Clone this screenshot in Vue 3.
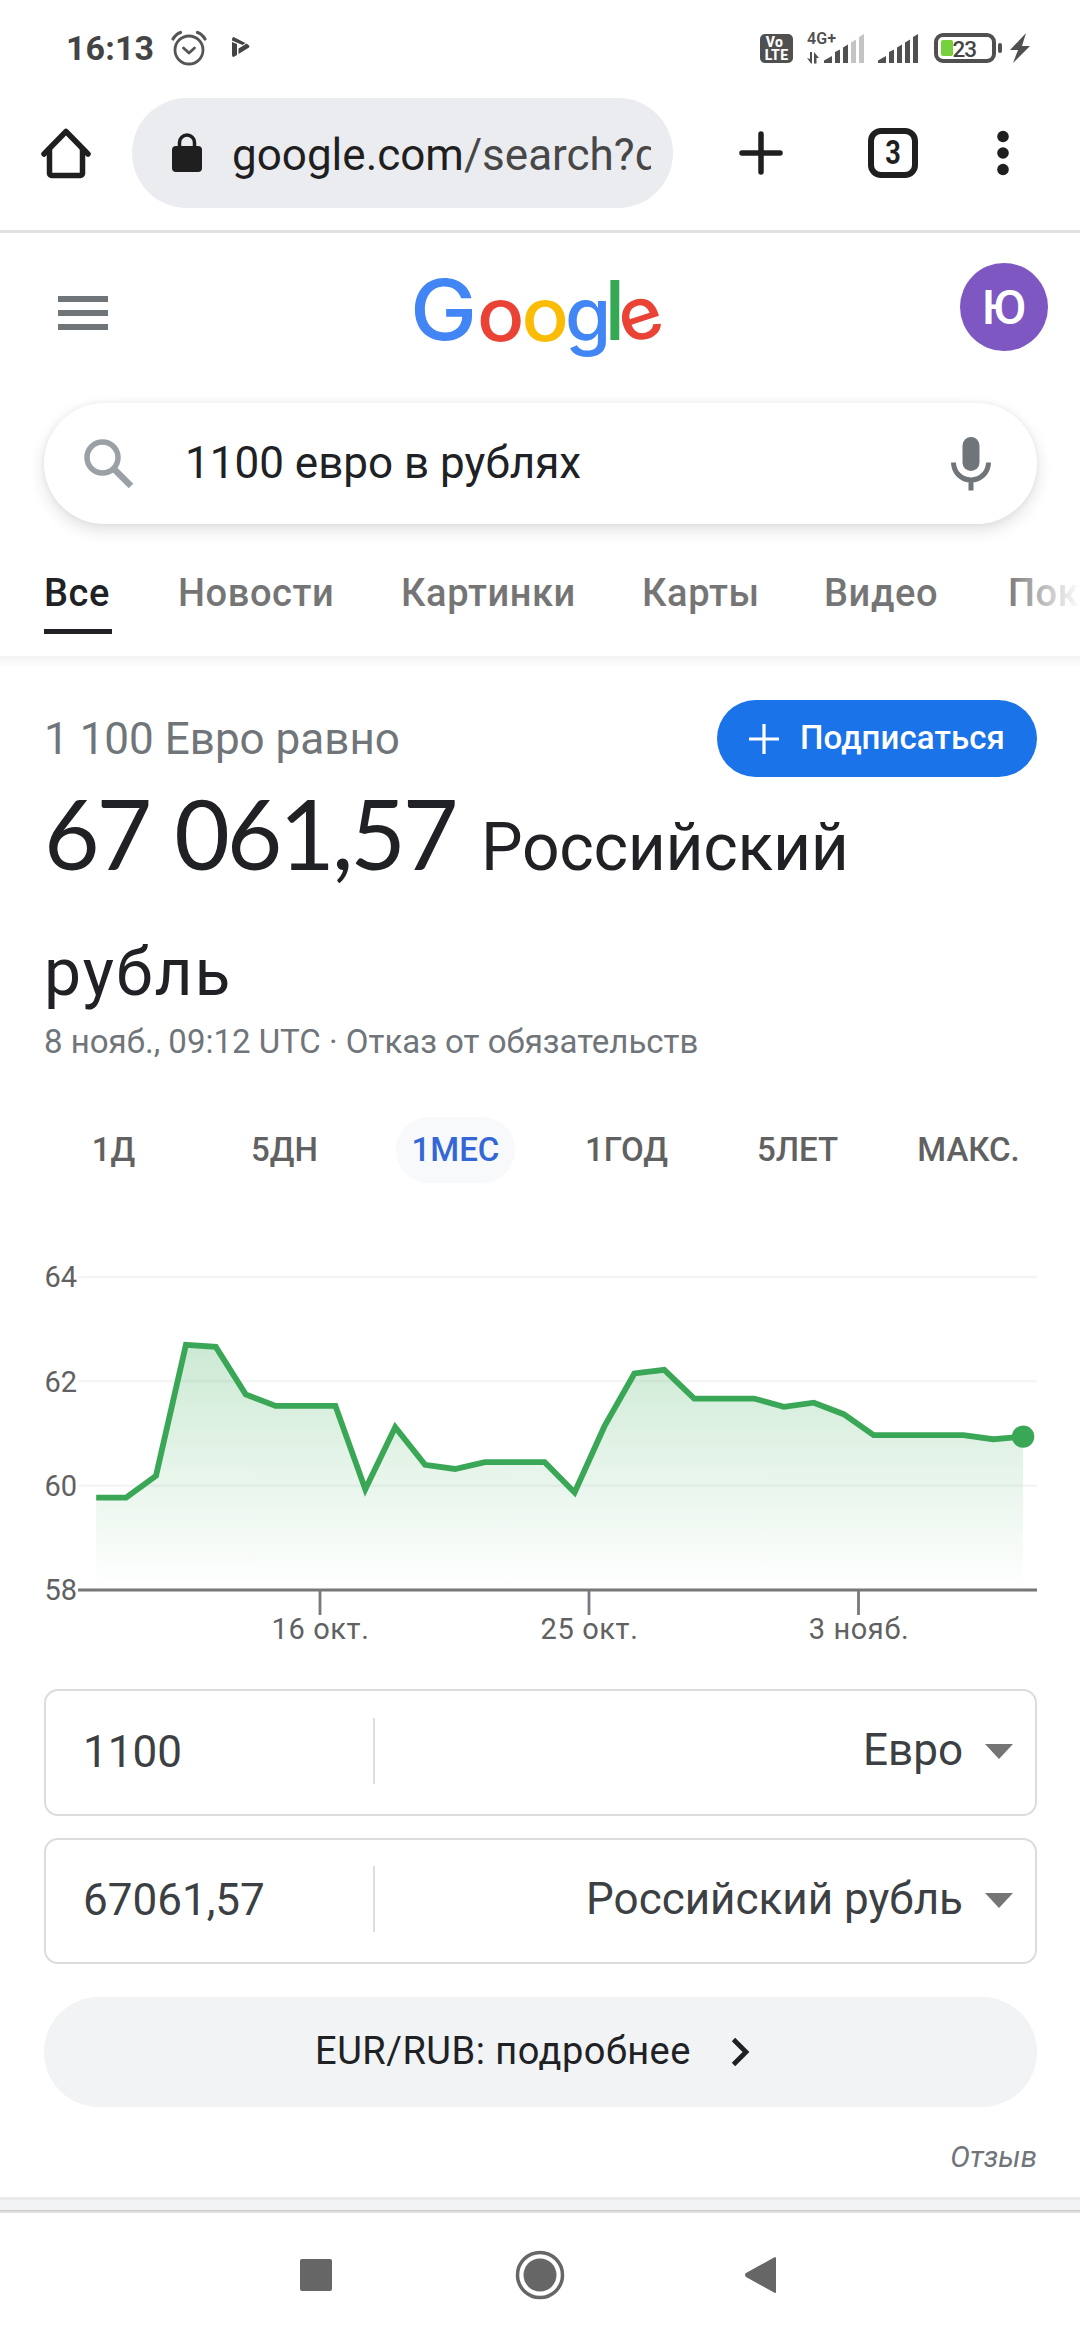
<template>
  <div class="screen">
    <!-- status bar -->
    <header class="status">
      <span class="clock">16:13</span>
      <svg class="alarm" width="36" height="36" viewBox="0 0 36 36" fill="none" stroke="#555" stroke-linecap="round">
        <circle cx="18" cy="20" r="14" stroke-width="2.8" />
        <path d="M12.5 18l5.5 5 5.5-5" stroke-width="2.8" stroke-linejoin="round" />
        <path d="M2 9q3-5 7.500-6.500M34 9q-3-5-7.500-6.500" stroke-width="3.200" />
      </svg>
      <svg class="play" width="18" height="20" viewBox="0 0 18 20" fill="#444">
        <path d="M1.500 0L13.500 6 10.500 8 0 3.500Q0 0 1.500 0z" />
        <path d="M0 5l5 2v11L1.500 20Q0 20 0 18z" />
        <path d="M14.500 6.500L17 8.500q1 1 0 2L6.500 17V11.500l5-3z" />
      </svg>
      <div class="status-right">
        <div class="volte"><span>Vo</span><span>LTE</span></div>
        <svg class="signal1" width="58" height="32" viewBox="0 0 58 32" fill="#505050">
          <text x="0" y="12" font-size="16" font-weight="600" textLength="29">4G+</text>
          <path d="M0 26l4 5.500h1V20H3v7zM7 20l5 6h-2.500v5.500H7z" />
          <path d="M17 31v-2.500l8-4.500v7zM28 31V20l5-2.500V31zM36 31V15.500l5-3V31z" />
          <path d="M44 31V10.500l5-3V31zM52 31V5l5-3v29z" fill="#c4c4c4" />
        </svg>
        <svg class="signal2" width="41" height="32" viewBox="0 0 41 32" fill="#505050">
          <path d="M0 31v-2.500l8-4.500v7zM11 31V20l5-2.500V31zM19 31V15.500l5-3V31zM27 31V10.500l5-3V31zM35 31V5l5-3v29z" />
        </svg>
        <svg class="battery" width="97" height="32" viewBox="0 0 97 32">
          <rect x="2" y="3" width="58" height="26" rx="7" fill="none" stroke="#505050" stroke-width="4" />
          <rect x="7" y="8" width="12" height="16" rx="2" fill="#76d13c" />
          <text x="18.500" y="25" font-size="22.500" font-weight="500" fill="#444" textLength="24.500">23</text>
          <rect x="64" y="11" width="4" height="10" rx="2" fill="#505050" />
          <path d="M92 1L76 18h8l-5 13 17-17h-8z" fill="#505050" />
        </svg>
      </div>
    </header>

    <!-- browser toolbar -->
    <div class="toolbar">
      <svg class="home" width="50" height="52" viewBox="0 0 50 52" fill="none" stroke="#1f1f1f" stroke-width="5.500">
        <path d="M3 27L25 4.500 47 27" stroke-linecap="round" stroke-linejoin="round" />
        <path d="M8.500 21.500v25a2 2 0 0 0 2 2h29a2 2 0 0 0 2-2v-25" />
      </svg>
      <div class="omnibox">
        <svg class="lock" width="30" height="40" viewBox="0 0 30 40">
          <rect y="13" width="30" height="26" rx="4" fill="#1f1f1f" />
          <path d="M7.500 15V9.500a7.500 7.500 0 0 1 15 0V15" fill="none" stroke="#1f1f1f" stroke-width="3.500" />
        </svg>
        <span class="url">google.com<em>/search?q</em></span>
      </div>
      <svg class="plus" width="44" height="44" viewBox="0 0 44 44" stroke="#1f1f1f" stroke-width="5.500" stroke-linecap="round">
        <path d="M22 3v38M3 22h38" />
      </svg>
      <div class="tab-count"><span>3</span></div>
      <svg class="dots" width="12" height="46" viewBox="0 0 12 46" fill="#1f1f1f">
        <circle v-for="n in 3" :key="n" cx="6" :cy="n * 16.5 - 10" r="5.800" />
      </svg>
    </div>

    <!-- page header -->
    <div class="page-head">
      <div class="burger"><i></i><i></i><i></i></div>
      <svg class="logo" width="250" height="86" viewBox="0 0 250 86">
        <text
          v-for="l in logo"
          :key="l.x"
          :transform="`translate(${l.x} ${l.y}) rotate(${l.rotate || 0}) scale(${l.sx || 1} 1)`"
          :font-size="l.size"
          :fill="l.color"
        >{{ l.char }}</text>
      </svg>
      <div class="avatar">Ю</div>
    </div>

    <div class="search-box">
      <svg width="50" height="50" viewBox="0 0 50 50" fill="none" stroke="#9aa0a6">
        <circle cx="18.500" cy="18.500" r="15.500" stroke-width="5.500" />
        <path d="M30 30l17 17" stroke-width="6.500" />
      </svg>
      <span class="query">1100 евро в рублях</span>
      <svg width="40" height="54" viewBox="0 0 40 54" fill="none" stroke="#70757a">
        <rect x="11.500" y="0" width="17" height="34" rx="8.500" fill="#70757a" stroke="none" />
        <path d="M2.500 25.500a17.500 17.500 0 0 0 35 0M20 43v10.500" stroke-width="5" />
      </svg>
    </div>

    <nav class="tabs">
      <a
        v-for="tab in tabs"
        :key="tab.name"
        :class="{ active: tab.active }"
        :style="{ width: tab.width + 'px' }"
      >{{ tab.name }}</a>
    </nav>

    <main class="converter">
      <div class="summary">
        <span class="equals">1 100 Евро равно</span>
        <button class="follow">
          <svg width="30" height="30" viewBox="0 0 30 30" stroke="#fff" stroke-width="3.200">
            <path d="M15 0v30M0 15h30" />
          </svg>
          <span>Подписаться</span>
        </button>
      </div>
      <div class="result">
        <div class="result-line">
          <span class="amount">67 061,57</span>
          <span class="currency">Российский</span>
        </div>
        <div class="result-line">
          <span class="currency wide">рубль</span>
        </div>
      </div>
      <div class="stamp">8 нояб., 09:12 UTC · Отказ от обязательств</div>

      <div class="ranges">
        <div v-for="r in ranges" :key="r" class="range">
          <span :class="{ active: r === '1МЕС' }">{{ r }}</span>
        </div>
      </div>

      <!-- rate chart -->
      <svg class="chart" width="1000" height="400" viewBox="0 0 1000 400">
        <defs>
          <linearGradient id="area" x1="0" y1="0" x2="0" y2="1">
            <stop offset="0" stop-color="#34a853" stop-opacity="0.250" />
            <stop offset="1" stop-color="#34a853" stop-opacity="0" />
          </linearGradient>
        </defs>
        <g v-for="v in [64, 62, 60, 58]" :key="v">
          <path v-if="v > 58" :d="`M34 ${toY(v)}H993`" stroke="#f5f5f5" stroke-width="2.500" />
          <text x="0.500" :y="toY(v) + 10.300" textLength="32.500">{{ v }}</text>
        </g>
        <path :d="areaPath" fill="url(#area)" />
        <path :d="linePath" fill="none" stroke="#3aa757" stroke-width="5.800" stroke-miterlimit="10" />
        <circle :cx="toX(rates.length - 1)" :cy="toY(rates[rates.length - 1])" r="11.200" fill="#3aa757" />
        <path d="M34 350H993" stroke="#757779" stroke-width="2.800" />
        <g v-for="d in dates" :key="d.label">
          <path :d="`M${d.x} 351V375`" stroke="#757a7f" stroke-width="2.800" />
          <text :x="d.x + 0.500" y="398.500" text-anchor="middle" letter-spacing="0.600">{{ d.label }}</text>
        </g>
      </svg>

      <div v-for="f in fields" :key="f.currency" class="field">
        <span class="value">{{ f.value }}</span>
        <span class="unit">{{ f.currency }}</span>
        <svg width="28" height="15" viewBox="0 0 28 15"><path d="M0 0h28L14 15z" fill="#757575" /></svg>
      </div>

      <button class="more">
        <span>EUR/RUB: подробнее</span>
        <svg width="19" height="30" viewBox="0 0 19 30" fill="none" stroke="#202124" stroke-width="4.800">
          <path d="M2.500 2.500L15 15 2.500 27.500" />
        </svg>
      </button>
      <div class="feedback">Отзыв</div>
    </main>

    <div class="next-card"></div>

    <!-- system navigation -->
    <footer class="sysnav">
      <svg width="480" height="50" viewBox="0 0 480 50" fill="#666">
        <rect x="0" y="9" width="32" height="32" rx="2" />
        <circle cx="240" cy="25" r="22.500" fill="none" stroke="#666" stroke-width="3.500" />
        <circle cx="240" cy="25" r="16.500" />
        <path d="M474 7.500q2-1.500 2 1v33q0 2.500-2 1L446 27q-2-2 0-4z" />
      </svg>
    </footer>
  </div>
</template>

<script setup>
import { computed } from 'vue';

const logo = [
  { char: 'G', x: -4, y: 63, size: 84, color: '#4285f4', sx: 1.07 },
  { char: 'o', x: 63, y: 64, size: 74, color: '#ea4335', sx: 1.06 },
  { char: 'o', x: 107.5, y: 64, size: 74, color: '#fbbc05', sx: 1.06 },
  { char: 'g', x: 151, y: 64, size: 74, color: '#4285f4', sx: 1.01 },
  { char: 'l', x: 190.5, y: 63, size: 82, color: '#34a853' },
  { char: 'e', x: 212, y: 68, size: 73, color: '#ea4335', rotate: -18, sx: 1.02 },
];

const tabs = [
  { name: 'Все', width: 68, active: true },
  { name: 'Новости', width: 157 },
  { name: 'Картинки', width: 175 },
  { name: 'Карты', width: 116 },
  { name: 'Видео', width: 118 },
  { name: 'Покупки', width: 160 },
];

const ranges = ['1Д', '5ДН', '1МЕС', '1ГОД', '5ЛЕТ', 'МАКС.'];

const rates = [
  59.77, 59.77, 60.19, 62.7, 62.66, 61.75, 61.53, 61.53, 61.53, 59.93, 61.12,
  60.4, 60.32, 60.45, 60.45, 60.45, 59.87, 61.14, 62.15, 62.22, 61.67, 61.67,
  61.67, 61.51, 61.59, 61.37, 60.97, 60.97, 60.97, 60.97, 60.89, 60.94,
];

const dates = [
  { x: 276, label: '16 окт.' },
  { x: 545, label: '25 окт.' },
  { x: 814.5, label: '3 нояб.' },
];

const fields = [
  { value: '1100', currency: 'Евро' },
  { value: '67061,57', currency: 'Российский рубль' },
];

const toX = (i) => 52.2 + i * 29.9;
const toY = (v) => 350 - (v - 58) * 52.17;

const linePath = computed(() => 'M' + rates.map((v, i) => `${toX(i)} ${toY(v)}`).join('L'));
const areaPath = computed(() => `${linePath.value}V350H${toX(0)}z`);
</script>

<style>
body {
  margin: 0;
  background: #fff;
}
</style>

<style scoped>
.screen {
  display: flex;
  flex-direction: column;
  width: 1080px;
  height: 2340px;
  overflow: hidden;
  background: #fff;
  font-family: Roboto, 'Noto Sans', sans-serif;
  color: #202124;
}

svg {
  display: block;
  flex: none;
  overflow: visible;
}

button {
  border: 0;
  font-family: inherit;
}

.status {
  display: flex;
  align-items: flex-start;
  height: 98px;
  padding: 0 49px 0 66px;
}

.clock {
  margin-top: 28px;
  width: 88px;
  font-size: 34px;
  line-height: 40px;
  font-weight: 700;
  letter-spacing: 0.1px;
  color: #444;
}

.alarm {
  margin: 30px 0 0 17px;
}

.play {
  margin: 37px 0 0 25px;
}

.status-right {
  display: flex;
  margin: 32px 0 0 auto;
}

.volte {
  display: flex;
  flex-direction: column;
  align-items: center;
  width: 33px;
  height: 29px;
  margin: 2px 14px 0 0;
  border-radius: 5px;
  background: #505050;
  color: #fff;
  font-size: 14px;
  line-height: 13px;
  font-weight: 800;
  letter-spacing: 0.3px;
}

.volte span:first-child {
  margin: 2px 4px 0 0;
}

.signal2 {
  margin-left: 13px;
}

.battery {
  margin-left: 15px;
}

.toolbar {
  display: flex;
  align-items: center;
  height: 110px;
  padding: 0 71px 22px 41px;
  border-bottom: 3px solid #e1e2e1;
}

.omnibox {
  display: flex;
  align-items: center;
  width: 541px;
  height: 110px;
  margin-left: 41px;
  padding: 0 22px 0 40px;
  box-sizing: border-box;
  border-radius: 55px;
  background: #ebecf0;
}

.url {
  width: 419px;
  margin: 3px 0 0 30px;
  overflow: hidden;
  font-size: 44px;
  line-height: 60px;
  white-space: nowrap;
  color: #1f1f1f;
}

.url em {
  font-style: normal;
  color: #474747;
}

.plus {
  margin-left: 66px;
}

.tab-count {
  width: 38px;
  height: 38px;
  margin-left: 85px;
  border: 6px solid #1f1f1f;
  border-radius: 13px;
  font-size: 33px;
  line-height: 37px;
  font-weight: 700;
  text-align: center;
  color: #1f1f1f;
}

.tab-count span {
  display: block;
  transform: scaleX(0.82);
}

.dots {
  margin-left: auto;
}

.page-head {
  display: flex;
  align-items: flex-start;
  height: 170px;
  padding: 0 32px 0 58px;
}

.burger {
  display: flex;
  flex-direction: column;
  gap: 8px;
  width: 50px;
  margin-top: 63px;
}

.burger i {
  height: 6px;
  background: #70757a;
}

.logo {
  margin: 44px 0 0 306px;
  font-family: Inter, sans-serif;
  font-weight: 500;
}

.avatar {
  width: 88px;
  height: 88px;
  margin: 30px 0 0 auto;
  border-radius: 50%;
  background: #7e57c2;
  color: #fff;
  font-size: 48px;
  line-height: 90px;
  font-weight: 500;
  text-align: center;
}

.search-box {
  display: flex;
  align-items: center;
  height: 121px;
  margin: 0 43px 0 44px;
  padding: 0 46px 0 40px;
  border-radius: 61px;
  box-shadow: 0 6px 16px rgba(32, 33, 36, 0.14), 0 0 6px rgba(32, 33, 36, 0.05);
}

.query {
  flex: 1;
  margin: -2px 0 0 51px;
  font-size: 44px;
}

.tabs {
  position: relative;
  display: flex;
  gap: 66px;
  height: 132px;
  padding-left: 44px;
  overflow: hidden;
}

.tabs::after {
  content: '';
  position: absolute;
  top: 40px;
  right: 0;
  width: 75px;
  height: 85px;
  background: linear-gradient(90deg, rgba(255, 255, 255, 0), #fff);
}

.tabs a {
  flex: none;
  box-sizing: border-box;
  height: 110px;
  padding-top: 46px;
  font-size: 38px;
  line-height: 46px;
  font-weight: 500;
  letter-spacing: 0.6px;
  white-space: nowrap;
  color: #757575;
}

.tabs a.active {
  border-bottom: 5px solid #202124;
  color: #202124;
}

.converter {
  height: 1541px;
  padding: 44px 43px 0 44px;
  box-sizing: border-box;
  background: linear-gradient(rgba(0, 0, 0, 0.05), rgba(0, 0, 0, 0)) top / 100% 11px no-repeat;
}

.summary {
  display: flex;
  align-items: center;
  justify-content: space-between;
  height: 77px;
}

.equals {
  font-size: 44px;
  color: #70757a;
}

.follow {
  display: flex;
  align-items: center;
  gap: 21px;
  width: 320px;
  height: 77px;
  padding: 0 0 0 32px;
  border-radius: 39px;
  background: #1a73e8;
  color: #fff;
  font-size: 33px;
  font-weight: 500;
  letter-spacing: 0.1px;
  white-space: nowrap;
}

.follow span {
  margin-top: -2px;
}

.result {
  height: 249px;
  margin-top: -2px;
}

.result-line {
  display: flex;
  align-items: baseline;
  height: 158px;
}

.result-line + .result-line {
  height: 91px;
}

.amount {
  width: 414px;
  font-family: Lato, sans-serif;
  font-size: 96px;
  line-height: 115px;
  letter-spacing: -3.2px;
  word-spacing: 4px;
  white-space: nowrap;
}

.currency {
  margin-left: 23px;
  font-size: 66px;
  line-height: 78px;
  letter-spacing: -0.3px;
}

.currency.wide {
  margin: 1px 0 0;
  letter-spacing: 2px;
}

.stamp {
  margin-top: -2px;
  font-size: 33px;
  line-height: 40px;
  color: #70757a;
}

.ranges {
  display: flex;
  margin: 55px -17px 0 -16px;
}

.range {
  flex: 1;
  display: flex;
  justify-content: center;
}

.range span {
  padding: 0 16px;
  border-radius: 33px;
  font-size: 33px;
  line-height: 66px;
  font-weight: 500;
  color: #616161;
}

.range span.active {
  background: #f8f9fb;
  color: #3367d6;
}

.chart {
  margin-top: 57px;
  font-size: 29px;
  fill: #616161;
}

.field {
  display: flex;
  align-items: center;
  height: 127px;
  margin-top: 49px;
  padding-right: 22px;
  box-sizing: border-box;
  border: 2px solid #dadce0;
  border-radius: 14px;
  font-size: 44px;
  color: #3c4043;
}

.field + .field {
  height: 126px;
  margin-top: 22px;
}

.field svg {
  margin-top: -2px;
}

.value {
  width: 290px;
  height: 66px;
  margin-top: -4px;
  padding-left: 37px;
  border-right: 2px solid #dadce0;
  line-height: 69px;
}

.unit {
  flex: 1;
  margin: -5px 22px 0 0;
  text-align: right;
}

.more {
  display: flex;
  align-items: center;
  justify-content: center;
  gap: 40px;
  width: 993px;
  height: 110px;
  margin-top: 33px;
  padding: 0 16px 0 0;
  border-radius: 55px;
  background: #f1f3f4;
  color: #202124;
  font-size: 38px;
  letter-spacing: 0.5px;
}

.more span {
  margin-top: -2px;
}

.feedback {
  margin-top: 33px;
  font-size: 29.5px;
  line-height: 34px;
  font-style: italic;
  text-align: right;
  color: #70757a;
}

.next-card {
  height: 10px;
  border-top: 3px solid #ebebeb;
  border-bottom: 1px solid #c8caca;
  background: #f1f3f4;
}

.sysnav {
  flex: 1;
  padding: 37px 0 0 300px;
  border-top: 2px solid #dfe0df;
}
</style>
